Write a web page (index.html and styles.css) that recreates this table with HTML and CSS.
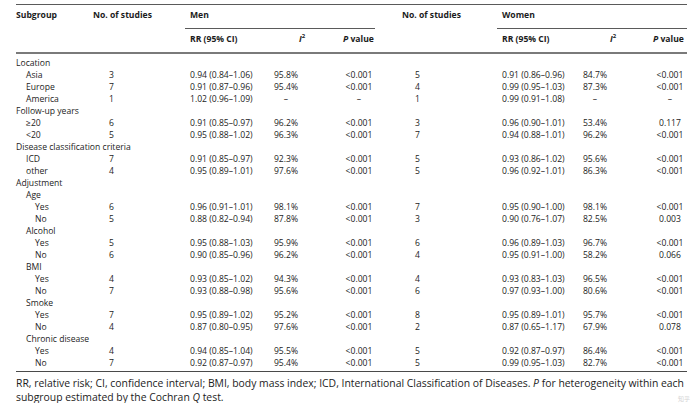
FILE: index.html
```html
<!DOCTYPE html>
<html lang="en">
<head>
<meta charset="utf-8">
<title>Subgroup analysis</title>
<link rel="stylesheet" href="styles.css">
</head>
<body>
<div class="page">
  <div class="table">
    <div class="row head1">
      <div class="c sub">Subgroup</div>
      <div class="c studm">No. of studies</div>
      <div class="c group">Men</div>
      <div class="c studw-h">No. of studies</div>
      <div class="c group">Women</div>
    </div>
    <div class="row head2">
      <div class="c"></div>
      <div class="c"></div>
      <div class="c rr">RR (95% CI)</div>
      <div class="c i2m"><i>I</i><sup>2</sup></div>
      <div class="c ph"><i>P</i> value</div>
      <div class="c"></div>
      <div class="c rr">RR (95% CI)</div>
      <div class="c i2w"><i>I</i><sup>2</sup></div>
      <div class="c ph"><i>P</i> value</div>
    </div>
    <div class="body">
      <div class="row"><div class="c sub">Location</div></div>
      <div class="row"><div class="c sub l2">Asia</div><div class="c nm">3</div><div class="c rr">0.94 (0.84–1.06)</div><div class="c i2m">95.8%</div><div class="c pv">&lt;0.001</div><div class="c nw">5</div><div class="c rr">0.91 (0.86–0.96)</div><div class="c i2w">84.7%</div><div class="c pv">&lt;0.001</div></div>
      <div class="row"><div class="c sub l2">Europe</div><div class="c nm">7</div><div class="c rr">0.91 (0.87–0.96)</div><div class="c i2m">95.4%</div><div class="c pv">&lt;0.001</div><div class="c nw">4</div><div class="c rr">0.99 (0.95–1.03)</div><div class="c i2w">87.3%</div><div class="c pv">&lt;0.001</div></div>
      <div class="row"><div class="c sub l2">America</div><div class="c nm">1</div><div class="c rr">1.02 (0.96–1.09)</div><div class="c i2m">–</div><div class="c pv">–</div><div class="c nw">1</div><div class="c rr">0.99 (0.91–1.08)</div><div class="c i2w">–</div><div class="c pv">–</div></div>
      <div class="row"><div class="c sub">Follow-up years</div></div>
      <div class="row"><div class="c sub l2">≥20</div><div class="c nm">6</div><div class="c rr">0.91 (0.85–0.97)</div><div class="c i2m">96.2%</div><div class="c pv">&lt;0.001</div><div class="c nw">3</div><div class="c rr">0.96 (0.90–1.01)</div><div class="c i2w">53.4%</div><div class="c pv">0.117</div></div>
      <div class="row"><div class="c sub l2">&lt;20</div><div class="c nm">5</div><div class="c rr">0.95 (0.88–1.02)</div><div class="c i2m">96.3%</div><div class="c pv">&lt;0.001</div><div class="c nw">7</div><div class="c rr">0.94 (0.88–1.01)</div><div class="c i2w">96.2%</div><div class="c pv">&lt;0.001</div></div>
      <div class="row"><div class="c sub wide">Disease classification criteria</div></div>
      <div class="row"><div class="c sub l2">ICD</div><div class="c nm">7</div><div class="c rr">0.91 (0.85–0.97)</div><div class="c i2m">92.3%</div><div class="c pv">&lt;0.001</div><div class="c nw">5</div><div class="c rr">0.93 (0.86–1.02)</div><div class="c i2w">95.6%</div><div class="c pv">&lt;0.001</div></div>
      <div class="row"><div class="c sub l2">other</div><div class="c nm">4</div><div class="c rr">0.95 (0.89–1.01)</div><div class="c i2m">97.6%</div><div class="c pv">&lt;0.001</div><div class="c nw">5</div><div class="c rr">0.96 (0.92–1.01)</div><div class="c i2w">86.3%</div><div class="c pv">&lt;0.001</div></div>
      <div class="row"><div class="c sub">Adjustment</div></div>
      <div class="row"><div class="c sub l2">Age</div></div>
      <div class="row"><div class="c sub l3">Yes</div><div class="c nm">6</div><div class="c rr">0.96 (0.91–1.01)</div><div class="c i2m">98.1%</div><div class="c pv">&lt;0.001</div><div class="c nw">7</div><div class="c rr">0.95 (0.90–1.00)</div><div class="c i2w">98.1%</div><div class="c pv">&lt;0.001</div></div>
      <div class="row"><div class="c sub l3">No</div><div class="c nm">5</div><div class="c rr">0.88 (0.82–0.94)</div><div class="c i2m">87.8%</div><div class="c pv">&lt;0.001</div><div class="c nw">3</div><div class="c rr">0.90 (0.76–1.07)</div><div class="c i2w">82.5%</div><div class="c pv">0.003</div></div>
      <div class="row"><div class="c sub l2">Alcohol</div></div>
      <div class="row"><div class="c sub l3">Yes</div><div class="c nm">5</div><div class="c rr">0.95 (0.88–1.03)</div><div class="c i2m">95.9%</div><div class="c pv">&lt;0.001</div><div class="c nw">6</div><div class="c rr">0.96 (0.89–1.03)</div><div class="c i2w">96.7%</div><div class="c pv">&lt;0.001</div></div>
      <div class="row"><div class="c sub l3">No</div><div class="c nm">6</div><div class="c rr">0.90 (0.85–0.96)</div><div class="c i2m">96.2%</div><div class="c pv">&lt;0.001</div><div class="c nw">4</div><div class="c rr">0.95 (0.91–1.00)</div><div class="c i2w">58.2%</div><div class="c pv">0.066</div></div>
      <div class="row"><div class="c sub l2">BMI</div></div>
      <div class="row"><div class="c sub l3">Yes</div><div class="c nm">4</div><div class="c rr">0.93 (0.85–1.02)</div><div class="c i2m">94.3%</div><div class="c pv">&lt;0.001</div><div class="c nw">4</div><div class="c rr">0.93 (0.83–1.03)</div><div class="c i2w">96.5%</div><div class="c pv">&lt;0.001</div></div>
      <div class="row"><div class="c sub l3">No</div><div class="c nm">7</div><div class="c rr">0.93 (0.88–0.98)</div><div class="c i2m">95.6%</div><div class="c pv">&lt;0.001</div><div class="c nw">6</div><div class="c rr">0.97 (0.93–1.00)</div><div class="c i2w">80.6%</div><div class="c pv">&lt;0.001</div></div>
      <div class="row"><div class="c sub l2">Smoke</div></div>
      <div class="row"><div class="c sub l3">Yes</div><div class="c nm">7</div><div class="c rr">0.95 (0.89–1.02)</div><div class="c i2m">95.2%</div><div class="c pv">&lt;0.001</div><div class="c nw">8</div><div class="c rr">0.95 (0.89–1.01)</div><div class="c i2w">95.7%</div><div class="c pv">&lt;0.001</div></div>
      <div class="row"><div class="c sub l3">No</div><div class="c nm">4</div><div class="c rr">0.87 (0.80–0.95)</div><div class="c i2m">97.6%</div><div class="c pv">&lt;0.001</div><div class="c nw">2</div><div class="c rr">0.87 (0.65–1.17)</div><div class="c i2w">67.9%</div><div class="c pv">0.078</div></div>
      <div class="row"><div class="c sub l2 wide">Chronic disease</div></div>
      <div class="row"><div class="c sub l3">Yes</div><div class="c nm">4</div><div class="c rr">0.94 (0.85–1.04)</div><div class="c i2m">95.5%</div><div class="c pv">&lt;0.001</div><div class="c nw">5</div><div class="c rr">0.92 (0.87–0.97)</div><div class="c i2w">86.4%</div><div class="c pv">&lt;0.001</div></div>
      <div class="row"><div class="c sub l3">No</div><div class="c nm">7</div><div class="c rr">0.92 (0.87–0.97)</div><div class="c i2m">95.4%</div><div class="c pv">&lt;0.001</div><div class="c nw">5</div><div class="c rr">0.99 (0.95–1.03)</div><div class="c i2w">82.7%</div><div class="c pv">&lt;0.001</div></div>
    </div>
  </div>
  <p class="note">RR, relative risk; CI, confidence interval; BMI, body mass index; ICD, International Classification of Diseases. <i>P</i> for heterogeneity within each subgroup estimated by the Cochran <i>Q</i> test.</p>
  <span class="mark">知乎</span>
</div>
</body>
</html>
```
FILE: styles.css
```css
html, body {
  margin: 0;
  padding: 0;
  background: #ffffff;
}

.page {
  position: relative;
  width: 700px;
  height: 403px;
  padding: 4px 0 0 16px;
  box-sizing: border-box;
  font-family: "Open Sans", "Noto Sans", sans-serif;
  color: #1c1c1c;
}

.table {
  width: 671px;
  border-top: 1px solid #5a5a5a;
  border-bottom: 1px solid #4a4a4a;
  font-size: 8.6px;
}

.row {
  display: grid;
  grid-template-columns: 77px 92px 81px 72px 37px 122px 81px 70px 39px;
  line-height: 12px;
  white-space: nowrap;
}

.c {
  min-width: 0;
}

.head1, .head2 {
  font-weight: 700;
  line-height: 12px;
}

.head1 .c {
  padding: 4px 0 8px;
}

.head1 .group {
  grid-column: span 3;
  border-bottom: 1px solid #5a5a5a;
  padding: 4px 0 7px 5px;
}

.head1 .studw-h {
  padding-left: 27px;
}

.head2 {
  border-bottom: 2px solid #7a7a7a;
}

.head2 .c {
  padding: 4px 0 7px;
}

.head2 .rr {
  padding-left: 5px;
}

.head2 .ph {
  padding-left: 5px;
}

.body {
  padding: 3px 0 2px;
}

.sub.wide {
  grid-column: span 3;
}

.l2 {
  padding-left: 10px;
}

.l3 {
  padding-left: 19px;
}

.nm {
  padding-left: 16px;
}

.nw {
  padding-left: 40px;
}

.rr {
  padding-left: 5px;
}

.i2m {
  text-align: center;
  padding-right: 32px;
}

.i2w {
  text-align: center;
  padding-right: 36px;
}

.pv {
  text-align: center;
  padding-left: 5px;
}

sup {
  font-size: 6px;
  line-height: 0;
  vertical-align: 4px;
}

.note {
  width: 675px;
  margin: 5px 0 0;
  font-size: 10.4px;
  line-height: 13.5px;
  color: #1c1c1c;
}

.mark {
  position: absolute;
  right: 10px;
  bottom: 0;
  font-family: "Noto Sans CJK SC", sans-serif;
  font-size: 6px;
  line-height: 8px;
  color: #d4d4d4;
}
```
